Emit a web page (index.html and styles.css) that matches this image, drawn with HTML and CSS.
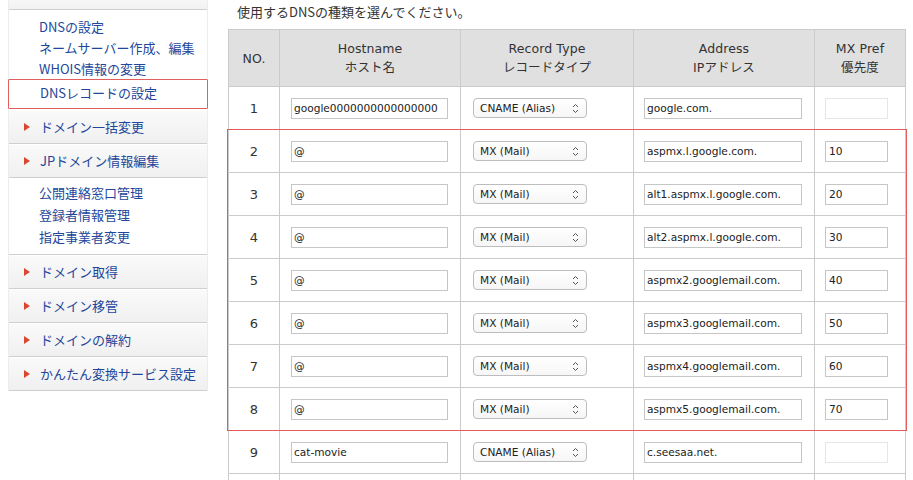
FILE: index.html
```html
<!DOCTYPE html>
<html lang="ja">
<head>
<meta charset="utf-8">
<title>DNSレコードの設定</title>
<link rel="stylesheet" href="styles.css">
</head>
<body>
<div class="page">
  <aside class="side">
    <div class="cut"></div>
    <div class="links">
      <a class="link">DNSの設定</a>
      <a class="link">ネームサーバー作成、編集</a>
      <a class="link">WHOIS情報の変更</a>
      <a class="link active">DNSレコードの設定</a>
    </div>
    <div class="item"><span class="tri"></span>ドメイン一括変更</div>
    <div class="item"><span class="tri"></span>JPドメイン情報編集</div>
    <div class="links links2">
      <a class="link">公開連絡窓口管理</a>
      <a class="link">登録者情報管理</a>
      <a class="link">指定事業者変更</a>
    </div>
    <div class="item"><span class="tri"></span>ドメイン取得</div>
    <div class="item"><span class="tri"></span>ドメイン移管</div>
    <div class="item"><span class="tri"></span>ドメインの解約</div>
    <div class="item"><span class="tri"></span>かんたん変換サービス設定</div>
  </aside>
  <main class="main">
    <p class="intro">使用するDNSの種類を選んでください。</p>
    <div class="table">
      <div class="row head">
        <div class="cell">NO.</div>
        <div class="cell">Hostname<br>ホスト名</div>
        <div class="cell">Record Type<br>レコードタイプ</div>
        <div class="cell">Address<br>IPアドレス</div>
        <div class="cell">MX Pref<br>優先度</div>
      </div>
      <div class="row">
        <div class="cell num">1</div>
        <div class="cell f host"><span class="inp">google0000000000000000</span></div>
        <div class="cell f type"><span class="sel">CNAME (Alias)<svg class="arr" width="7" height="11" viewBox="0 0 7 11"><path d="M1 4 L3.5 1.5 L6 4 M1 7 L3.5 9.5 L6 7" fill="none" stroke="#555" stroke-width="1"/></svg></span></div>
        <div class="cell f addr"><span class="inp">google.com.</span></div>
        <div class="cell f mx"><span class="inp dis"></span></div>
      </div>
      <div class="group">
        <div class="row">
          <div class="cell num">2</div>
          <div class="cell f host"><span class="inp">@</span></div>
          <div class="cell f type"><span class="sel">MX (Mail)<svg class="arr" width="7" height="11" viewBox="0 0 7 11"><path d="M1 4 L3.5 1.5 L6 4 M1 7 L3.5 9.5 L6 7" fill="none" stroke="#555" stroke-width="1"/></svg></span></div>
          <div class="cell f addr"><span class="inp">aspmx.l.google.com.</span></div>
          <div class="cell f mx"><span class="inp">10</span></div>
        </div>
        <div class="row">
          <div class="cell num">3</div>
          <div class="cell f host"><span class="inp">@</span></div>
          <div class="cell f type"><span class="sel">MX (Mail)<svg class="arr" width="7" height="11" viewBox="0 0 7 11"><path d="M1 4 L3.5 1.5 L6 4 M1 7 L3.5 9.5 L6 7" fill="none" stroke="#555" stroke-width="1"/></svg></span></div>
          <div class="cell f addr"><span class="inp">alt1.aspmx.l.google.com.</span></div>
          <div class="cell f mx"><span class="inp">20</span></div>
        </div>
        <div class="row">
          <div class="cell num">4</div>
          <div class="cell f host"><span class="inp">@</span></div>
          <div class="cell f type"><span class="sel">MX (Mail)<svg class="arr" width="7" height="11" viewBox="0 0 7 11"><path d="M1 4 L3.5 1.5 L6 4 M1 7 L3.5 9.5 L6 7" fill="none" stroke="#555" stroke-width="1"/></svg></span></div>
          <div class="cell f addr"><span class="inp">alt2.aspmx.l.google.com.</span></div>
          <div class="cell f mx"><span class="inp">30</span></div>
        </div>
        <div class="row">
          <div class="cell num">5</div>
          <div class="cell f host"><span class="inp">@</span></div>
          <div class="cell f type"><span class="sel">MX (Mail)<svg class="arr" width="7" height="11" viewBox="0 0 7 11"><path d="M1 4 L3.5 1.5 L6 4 M1 7 L3.5 9.5 L6 7" fill="none" stroke="#555" stroke-width="1"/></svg></span></div>
          <div class="cell f addr"><span class="inp">aspmx2.googlemail.com.</span></div>
          <div class="cell f mx"><span class="inp">40</span></div>
        </div>
        <div class="row">
          <div class="cell num">6</div>
          <div class="cell f host"><span class="inp">@</span></div>
          <div class="cell f type"><span class="sel">MX (Mail)<svg class="arr" width="7" height="11" viewBox="0 0 7 11"><path d="M1 4 L3.5 1.5 L6 4 M1 7 L3.5 9.5 L6 7" fill="none" stroke="#555" stroke-width="1"/></svg></span></div>
          <div class="cell f addr"><span class="inp">aspmx3.googlemail.com.</span></div>
          <div class="cell f mx"><span class="inp">50</span></div>
        </div>
        <div class="row">
          <div class="cell num">7</div>
          <div class="cell f host"><span class="inp">@</span></div>
          <div class="cell f type"><span class="sel">MX (Mail)<svg class="arr" width="7" height="11" viewBox="0 0 7 11"><path d="M1 4 L3.5 1.5 L6 4 M1 7 L3.5 9.5 L6 7" fill="none" stroke="#555" stroke-width="1"/></svg></span></div>
          <div class="cell f addr"><span class="inp">aspmx4.googlemail.com.</span></div>
          <div class="cell f mx"><span class="inp">60</span></div>
        </div>
        <div class="row">
          <div class="cell num">8</div>
          <div class="cell f host"><span class="inp">@</span></div>
          <div class="cell f type"><span class="sel">MX (Mail)<svg class="arr" width="7" height="11" viewBox="0 0 7 11"><path d="M1 4 L3.5 1.5 L6 4 M1 7 L3.5 9.5 L6 7" fill="none" stroke="#555" stroke-width="1"/></svg></span></div>
          <div class="cell f addr"><span class="inp">aspmx5.googlemail.com.</span></div>
          <div class="cell f mx"><span class="inp">70</span></div>
        </div>
      </div>
      <div class="row">
        <div class="cell num">9</div>
        <div class="cell f host"><span class="inp">cat-movie</span></div>
        <div class="cell f type"><span class="sel">CNAME (Alias)<svg class="arr" width="7" height="11" viewBox="0 0 7 11"><path d="M1 4 L3.5 1.5 L6 4 M1 7 L3.5 9.5 L6 7" fill="none" stroke="#555" stroke-width="1"/></svg></span></div>
        <div class="cell f addr"><span class="inp">c.seesaa.net.</span></div>
        <div class="cell f mx"><span class="inp dis"></span></div>
      </div>
      <div class="row last">
        <div class="cell num"></div>
        <div class="cell f host"></div>
        <div class="cell f type"></div>
        <div class="cell f addr"></div>
        <div class="cell f mx"></div>
      </div>
    </div>
  </main>
</div>
</body>
</html>
```

FILE: styles.css
```css
html, body {
  margin: 0;
  padding: 0;
  background: #fff;
}
body {
  font-family: "Noto Sans CJK JP", sans-serif;
  color: #333;
  overflow: hidden;
}
.page {
  display: flex;
  gap: 20px;
  padding-left: 8px;
  height: 480px;
  overflow: hidden;
}
.side {
  width: 200px;
  flex: none;
  box-sizing: border-box;
  border-left: 1px solid #ececec;
  border-right: 1px solid #ececec;
  font-size: 13px;
  color: #22479a;
  align-self: flex-start;
}
.cut {
  height: 9px;
  border-bottom: 1px solid #cfcfcf;
  background: linear-gradient(#f7f7f7, #f1f1f1);
}
.links {
  display: flex;
  flex-direction: column;
  padding-top: 6px;
  padding-bottom: 1px;
  background: #fff;
}
.link {
  display: block;
  line-height: 21px;
  padding-left: 30px;
  color: #22479a;
}
.link.active {
  margin: 0 -1px;
  padding: 2px 0 5px 31px;
  border: 1px solid #e06060;
  border-radius: 1px;
}
.links2 {
  padding-top: 4px;
  padding-bottom: 6px;
  border-bottom: 1px solid #cfcfcf;
}
.links2 .link {
  line-height: 22px;
}
.item {
  height: 33px;
  display: flex;
  align-items: center;
  border-bottom: 1px solid #cfcfcf;
  background: linear-gradient(#fafafa, #f0f0f0);
  padding-left: 15px;
  box-shadow: inset 0 1px 0 #fff;
}
.tri {
  width: 0;
  height: 0;
  border-top: 4px solid transparent;
  border-bottom: 4px solid transparent;
  border-left: 6px solid #d9482e;
  margin-right: 10px;
}
.main {
  flex: 1;
  min-width: 0;
}
.intro {
  margin: 0 0 7px 0;
  padding: 2px 0 0 9px;
  font-size: 13px;
  line-height: 20px;
  color: #333;
}
.table {
  width: 678px;
  border-top: 1px solid #cbcbcb;
}
.row {
  display: grid;
  grid-template-columns: 52px 181px 173px 181px 91px;
  height: 43px;
}
.group {
  position: relative;
}
.group::after {
  content: "";
  position: absolute;
  left: -1px;
  right: -1px;
  top: -1px;
  bottom: 0;
  border: 1px solid #e25c5c;
  pointer-events: none;
  z-index: 2;
}
.cell {
  box-sizing: border-box;
  border-right: 1px solid #cbcbcb;
  border-bottom: 1px solid #cbcbcb;
  display: flex;
  align-items: center;
}
.cell:first-child {
  border-left: 1px solid #cbcbcb;
}
.head {
  height: 57px;
  background: #e0e0e0;
}
.head .cell {
  justify-content: center;
  text-align: center;
  font-family: "DejaVu Sans", "Noto Sans CJK JP", sans-serif;
  font-size: 12.5px;
  line-height: 19px;
  color: #333;
  letter-spacing: 0.1px;
}
.num {
  justify-content: center;
  font-family: "DejaVu Sans", sans-serif;
  font-size: 13px;
  color: #333;
}
.host { padding-left: 11px; }
.type { padding-left: 12px; }
.addr { padding-left: 10px; }
.mx { padding-left: 10px; }
.inp {
  box-sizing: border-box;
  height: 21px;
  border: 1px solid #c6c6c6;
  background: #fff;
  font-family: "DejaVu Sans", sans-serif;
  font-size: 10.6px;
  line-height: 19px;
  color: #222;
  padding-left: 2px;
  white-space: nowrap;
  overflow: hidden;
}
.host .inp { width: 157px; }
.addr .inp { width: 158px; }
.mx .inp { width: 63px; padding-left: 3px; }
.inp.dis { border-color: #e6e6e6; }
.sel {
  box-sizing: border-box;
  width: 114px;
  height: 20px;
  border: 1px solid #bdbdbd;
  border-radius: 4px;
  background: linear-gradient(#ffffff, #f6f6f6);
  display: flex;
  align-items: center;
  justify-content: space-between;
  padding: 0 7px 0 6px;
  font-family: "DejaVu Sans", sans-serif;
  font-size: 10.6px;
  color: #222;
  white-space: nowrap;
}
.arr {
  flex: none;
}
```
